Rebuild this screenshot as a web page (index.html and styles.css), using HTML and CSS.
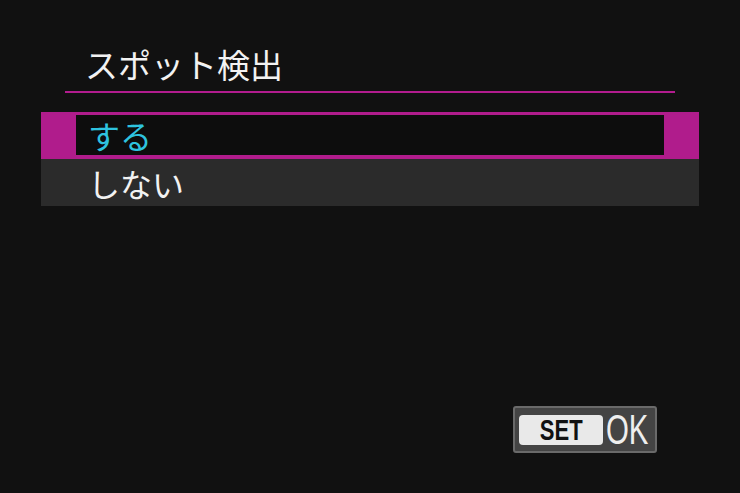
FILE: index.html
```html
<!DOCTYPE html>
<html lang="ja">
<head>
<meta charset="utf-8">
<link rel="stylesheet" href="styles.css">
</head>
<body>
<div class="screen">
  <div class="header">
    <h1 class="title">スポット検出</h1>
  </div>
  <div class="menu">
    <div class="item selected"><span class="label">する</span></div>
    <div class="item"><span class="label">しない</span></div>
  </div>
  <div class="footer">
    <div class="setok">
      <span class="setkey"><span class="settext">SET</span></span>
      <span class="ok">OK</span>
    </div>
  </div>
</div>
</body>
</html>
```
FILE: styles.css
```css
html, body {
  margin: 0;
  padding: 0;
  background: #111111;
}
.screen {
  width: 740px;
  height: 493px;
  background: #111111;
  font-family: "Noto Sans CJK JP", "Noto Sans", sans-serif;
  color: #f2f2f2;
  overflow: hidden;
}
.header {
  margin: 0 65px;
  padding-top: 43px;
  padding-bottom: 6px;
  border-bottom: 2px solid #b21c8e;
}
.title {
  margin: 0;
  padding-left: 20px;
  font-size: 33px;
  line-height: 42px;
  font-weight: 400;
  color: #f2f2f2;
}
.menu {
  margin: 19px 41px 0 41px;
  width: 658px;
}
.item {
  height: 47px;
  box-sizing: border-box;
  background: #2b2b2b;
  display: flex;
  align-items: center;
  padding-left: 47px;
}
.item.selected {
  background: #0d0d0d;
  border-style: solid;
  border-color: #b01c8c;
  border-width: 3px 35px 4px 35px;
  padding-left: 12px;
}
.label {
  font-size: 32px;
  line-height: 40px;
  color: #f2f2f2;
}
.selected .label {
  color: #2ec3df;
}
.footer {
  margin-top: 200px;
  padding-left: 513px;
}
.setok {
  width: 144px;
  height: 47px;
  box-sizing: border-box;
  border: 2px solid #6a6a6a;
  border-radius: 3px;
  background: #444444;
  display: flex;
  align-items: center;
  padding-left: 4px;
}
.setkey {
  flex: none;
  width: 84px;
  height: 30px;
  background: #e9e9e9;
  border-radius: 4px;
  display: flex;
  align-items: center;
  justify-content: center;
}
.settext {
  font-family: "Liberation Sans", Arial, sans-serif;
  font-weight: 700;
  font-size: 29px;
  line-height: 30px;
  color: #111111;
  display: inline-block;
  transform: scaleX(0.76);
}
.ok {
  font-family: "Liberation Sans", Arial, sans-serif;
  font-size: 42px;
  line-height: 43px;
  color: #eeeeee;
  display: inline-block;
  margin-left: 3px;
  transform: scaleX(0.7);
  transform-origin: left center;
}
```
